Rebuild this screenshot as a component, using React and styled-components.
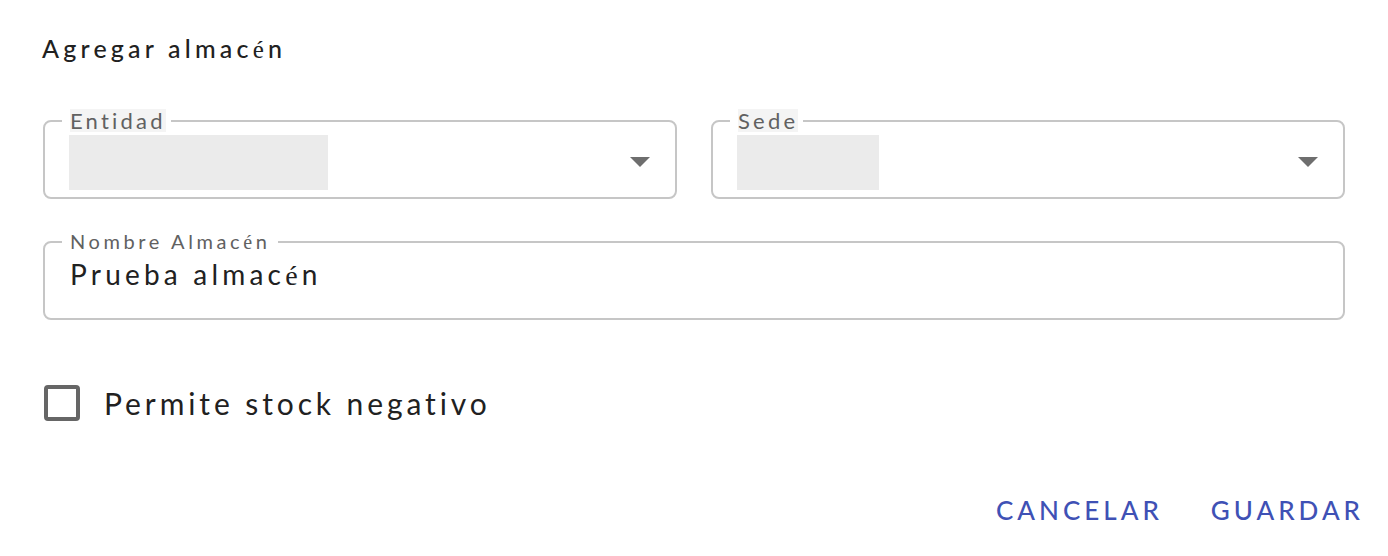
import React from 'react';
import styled, { createGlobalStyle } from 'styled-components';

const Global = createGlobalStyle`
  html, body { margin: 0; padding: 0; background: #ffffff; }
  body { font-family: Lato, "Noto Sans", sans-serif; }
`;

const Page = styled.div`
  width: 1388px;
  height: 556px;
  box-sizing: border-box;
  padding: 0 43px;
  display: flex;
  flex-direction: column;
`;

const Title = styled.h2`
  margin: 32px 0 0 -1px;
  font-size: 25px;
  line-height: 32px;
  font-weight: 500;
  color: #212121;
  letter-spacing: 4.2px;
`;

const Accent = styled.span`
  font-family: "Liberation Serif", serif;
`;

const Row = styled.div`
  display: grid;
  grid-template-columns: 1fr 1fr;
  column-gap: 34px;
  margin-top: 43px;
`;

const Field = styled.fieldset`
  box-sizing: border-box;
  height: 90px;
  margin: 0;
  padding: 0 25px 0 25px;
  border: 2px solid #c6c6c6;
  border-radius: 8px;
  min-width: 0;
  display: block;
`;

const Legend = styled.legend`
  margin-left: -8px;
  padding: 0 8px;
  font-size: ${p => p.$size || 20}px;
  line-height: 23px;
  color: #616161;
  letter-spacing: ${p => p.$spacing || 3.6}px;
`;

const LegendText = styled.span`
  display: block;
  margin-right: ${p => -(p.$trim || 0)}px;
  background: ${p => (p.$shaded ? '#f4f4f4' : 'transparent')};
`;

const SelectBody = styled.div`
  display: flex;
  align-items: center;
  justify-content: space-between;
  margin-top: 3px;
  margin-left: -1px;
`;

const Placeholder = styled.div`
  width: ${p => p.$w}px;
  height: 55px;
  background: #ebebeb;
`;

const Arrow = styled.svg`
  width: 20px;
  height: 10px;
  flex: none;
  margin-top: -1px;
`;

const FullField = styled(Field)`
  margin-top: 31px;
`;

const Value = styled.div`
  font-size: 28px;
  line-height: 36px;
  color: #212121;
  letter-spacing: 4.2px;
  margin-top: 2px;
`;

const CheckRow = styled.label`
  display: flex;
  align-items: center;
  gap: 24px;
  margin-top: 65px;
  margin-left: 1px;
  cursor: pointer;
`;

const Box = styled.span`
  box-sizing: border-box;
  width: 36px;
  height: 36px;
  border: 4px solid #666666;
  border-radius: 4px;
  flex: none;
`;

const CheckText = styled.span`
  font-size: 30px;
  line-height: 36px;
  color: #212121;
  letter-spacing: 3.9px;
`;

const Actions = styled.div`
  display: flex;
  justify-content: flex-end;
  gap: 16px;
  margin: auto -35px 0 0;
  padding-bottom: 22px;
`;

const Button = styled.button`
  background: none;
  border: none;
  padding: 6px 16px;
  font-family: Lato, "Noto Sans", sans-serif;
  font-size: 26px;
  line-height: 36px;
  font-weight: 500;
  letter-spacing: 4px;
  color: #3f51b5;
  text-transform: uppercase;
  cursor: pointer;
`;

function TriangleDown() {
  return (
    <Arrow viewBox="0 0 20 10">
      <path d="M0 0 L20 0 L10 10 Z" fill="#6e6e6e" />
    </Arrow>
  );
}

function SelectField({ label, width }) {
  return (
    <Field>
      <Legend $size={22} $spacing={3.2}>
        <LegendText $shaded $trim={3}>{label}</LegendText>
      </Legend>
      <SelectBody>
        <Placeholder $w={width} />
        <TriangleDown />
      </SelectBody>
    </Field>
  );
}

export default function App() {
  return (
    <>
      <Global />
      <Page>
        <Title>
          Agregar almac<Accent>é</Accent>n
        </Title>
        <Row>
          <SelectField label="Entidad" width={259} />
          <SelectField label="Sede" width={142} />
        </Row>
        <FullField>
          <Legend $size={20} $spacing={3.6}>
            <LegendText>
              Nombre Almac<Accent>é</Accent>n
            </LegendText>
          </Legend>
          <Value>
            Prueba almac<Accent>é</Accent>n
          </Value>
        </FullField>
        <CheckRow>
          <Box />
          <CheckText>Permite stock negativo</CheckText>
        </CheckRow>
        <Actions>
          <Button>Cancelar</Button>
          <Button>Guardar</Button>
        </Actions>
      </Page>
    </>
  );
}
